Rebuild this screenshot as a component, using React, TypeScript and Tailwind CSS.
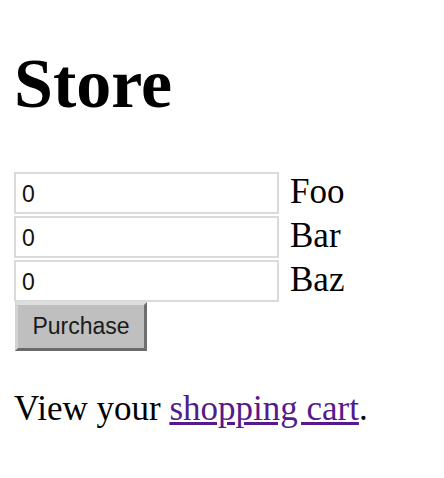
import { useState } from 'react';

const ITEMS = ['Foo', 'Bar', 'Baz'];

export default function App() {
  const [counts, setCounts] = useState<Record<string, string>>({ Foo: '0', Bar: '0', Baz: '0' });

  return (
    <div className="min-h-screen bg-white px-[14px] pt-[44px] text-black font-['Liberation_Serif',serif]">
      <h1 className="h-[80px] text-[70px] leading-[80px] font-bold">Store</h1>

      <form className="mt-[48px] flex flex-col items-start gap-[2px]" onSubmit={(e) => e.preventDefault()}>
        {ITEMS.map((name) => (
          <div key={name} className="flex h-[42px] items-center gap-[11px]">
            <input
              type="text"
              value={counts[name]}
              onChange={(e) => setCounts({ ...counts, [name]: e.target.value })}
              className="h-[42px] w-[265px] border-2 border-[#dadada] bg-white px-[6px] pt-[3px] text-[23px] text-[#111] font-['Liberation_Sans',sans-serif] outline-none"
            />
            <span className="-mt-[2px] text-[35px] leading-[40px]">{name}</span>
          </div>
        ))}
        <button
          type="submit"
          className="-mt-[2px] ml-px h-[49px] w-[132px] border-[3px] border-t-[#dedede] border-l-[#d2d2d2] border-r-[#6f6f6f] border-b-[#6a6a6a] bg-[#bfbfbf] text-[23px] text-[#1a1a1a] font-['Liberation_Sans',sans-serif]"
        >
          Purchase
        </button>
      </form>

      {/* cart link */}
      <p className="mt-[38px] text-[35px] leading-[40px]">
        View your <a href="#cart" className="text-[#551a8b] underline">shopping cart</a>.
      </p>
    </div>
  );
}
